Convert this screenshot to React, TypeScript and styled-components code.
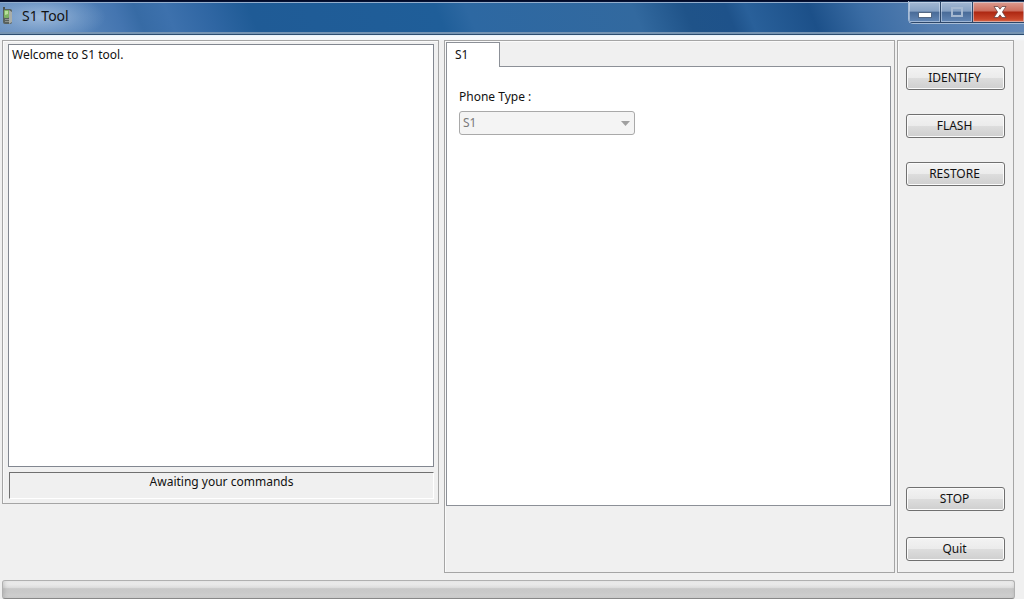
import React from "react";
import styled, { createGlobalStyle, css } from "styled-components";

const GlobalStyle = createGlobalStyle`
  *, *::before, *::after { box-sizing: border-box; }
  body {
    margin: 0;
    background: #f0f0f0;
    color: #111;
    font: 12px/16px "Noto Sans", "Open Sans", sans-serif;
  }
  button, select, textarea { font: inherit; color: inherit; margin: 0; }
`;

const Window = styled.div`
  display: flex;
  flex-direction: column;
  min-height: 100vh;
  background: #f0f0f0;
`;

const TitleBar = styled.header`
  display: flex;
  align-items: flex-start;
  justify-content: space-between;
  height: 35px;
  border-top: 1px solid #020a26;
  border-bottom: 1px solid #2c4d70;
  background:
    linear-gradient(#061336 0 1px, #94aecd 1px 2px, transparent 2px 31px, #7594b3 31px 33px),
    radial-gradient(ellipse 64px 24px at 42px 16px, rgba(176, 200, 228, 0.75), rgba(150, 182, 218, 0.35) 60%, transparent),
    linear-gradient(
      68deg,
      #6a90bf 0,
      #5583b9 8%,
      #4475b0 12%,
      #376ba5 14%,
      #3d71ad 17%,
      #2f66a3 21%,
      #1f5b96 25%,
      #1f5e99 43%,
      #2d68a2 46%,
      #32699f 62%,
      #1f5389 67%,
      #1e528a 71%,
      #29609a 73%,
      #1c5089 79%,
      #3a6ca4 84%,
      #537db0 90%,
      #668bb9 100%
    );
`;

const Caption = styled.h1`
  display: flex;
  align-items: center;
  gap: 8px;
  margin: 0;
  padding: 5px 0 0 2px;
  font-size: 14px;
  line-height: 20px;
  font-weight: 400;
`;

const CaptionButtons = styled.div`
  display: flex;
  height: 23px;
  border: solid #a9bdd6;
  border-width: 0 0 1px 1px;
  border-radius: 0 0 0 5px;
  overflow: hidden;
`;

const CaptionButton = styled.button<{ $close?: boolean }>`
  display: flex;
  align-items: center;
  justify-content: center;
  width: 32px;
  height: 22px;
  padding: 0;
  border: solid #2c4668;
  border-width: 1px 1px 1px 0;
  box-shadow: inset 0 0 0 1px rgba(220, 232, 247, 0.5);
  background: linear-gradient(#a3b8d3, #86a1c3 45%, #4a6c99 52%, #6488b6);
  ${(p) =>
    p.$close &&
    css`
      width: 51px;
      padding-left: 3px;
      border-right-width: 0;
      background: linear-gradient(#dd9c90, #cc6d5c 45%, #ad2712 50%, #c8462a 85%, #d96c4d);
    `}
`;

const Workspace = styled.main`
  display: grid;
  grid-template-columns: minmax(0, 437fr) minmax(0, 570fr);
  flex: 1;
  align-items: start;
  gap: 5px;
  padding: 4px 10px 7px 2px;
  border-top: 1px solid #e8f3fc;
  background: linear-gradient(#f4f8fc 0 3px, #f0f0f0 5px);
`;

const groupFrame = css`
  border: 1px solid #a5a5a5;
  box-shadow: inset 1px 1px #fafafa;
`;

const LogPanel = styled.section`
  ${groupFrame}
  padding: 3px 4px 4px 5px;
`;

const Log = styled.textarea`
  display: block;
  width: 100%;
  height: 423px;
  padding: 2px 3px;
  border: 1px solid #828790;
  border-radius: 0;
  background: #fff;
  outline: 0;
  resize: none;
`;

const Status = styled.output`
  display: block;
  height: 27px;
  margin: 5px 0 0 1px;
  padding-top: 1px;
  border: solid;
  border-width: 1px;
  border-color: #707070 #fff #fff #707070;
  text-align: center;
`;

const RightSide = styled.div`
  display: flex;
  align-self: stretch;
  gap: 2px;
  min-width: 0;
`;

const TabPanel = styled.section`
  ${groupFrame}
  flex: 1;
  min-width: 0;
  padding: 1px 3px 0 1px;
`;

const Tab = styled.button`
  display: block;
  position: relative;
  width: 54px;
  height: 25px;
  margin-bottom: -1px;
  padding: 0 8px;
  border: 1px solid #8c9097;
  border-bottom: 0;
  background: #fff;
  text-align: left;
`;

const TabPage = styled.div`
  height: 440px;
  padding: 22px 12px;
  border: 1px solid #8c9097;
  background: #fff;
`;

const Field = styled.label`
  display: grid;
  gap: 6px;
  width: 176px;
`;

const SelectBox = styled.span`
  display: grid;
  align-items: center;
  color: #7a7a7a;

  > * { grid-area: 1 / 1; }
  > svg { justify-self: end; margin-right: 5px; pointer-events: none; }
`;

const Select = styled.select`
  appearance: none;
  width: 100%;
  height: 24px;
  padding: 0 3px;
  border: 1px solid #a9a9a9;
  border-radius: 3px;
  background: #f4f4f4;
  opacity: 1;
`;

const Actions = styled.nav`
  ${groupFrame}
  display: flex;
  flex: none;
  flex-direction: column;
  justify-content: space-between;
  width: 117px;
  padding: 25px 8px 11px;
`;

const ActionGroup = styled.div<{ $gap: number }>`
  display: grid;
  gap: ${(p) => p.$gap}px;
`;

const ActionButton = styled.button`
  height: 24px;
  padding: 0 2px 1px 0;
  border: 1px solid #707070;
  border-radius: 3px;
  box-shadow: inset 0 0 0 1px #fbfbfb;
  background: linear-gradient(#f3f3f3, #ebebeb 50%, #dddddd 50%, #cfcfcf);
`;

const Progress = styled.div`
  height: 19px;
  margin: 0 9px 0 2px;
  border: 1px solid #b0b0b0;
  border-bottom-color: #888;
  border-radius: 3px;
  background: linear-gradient(#fafafa, #dcdcdc 40%, #c8c8c8 45%, #cacaca 70%, #d9d9d9);
  box-shadow: inset 1px 0 4px rgba(120, 120, 120, 0.35);
`;

const PhoneIcon = () => (
  <svg width="12" height="20" viewBox="0 0 12 20" aria-hidden="true">
    <rect x="1" y="1" width="2" height="5" fill="#4a524f" />
    <rect x="1" y="3" width="9" height="15" rx="2" fill="#59615d" />
    <path d="M7 4 L10 6 V16 L7 18 Z" fill="#a9ada8" />
    <rect x="2" y="4" width="5" height="8" rx="1" fill="#7db463" />
    <path d="M3 5 H6 V8 L3 9 Z" fill="#b9df9b" />
    <path d="M3 13.5 H7 M3 15.5 H7" stroke="#8c9490" />
  </svg>
);

const MinimizeIcon = () => (
  <svg width="14" height="14" viewBox="0 0 14 14" aria-hidden="true">
    <rect x="0.5" y="7.5" width="13" height="5" fill="#fff" stroke="#536884" />
  </svg>
);

const MaximizeIcon = () => (
  <svg width="14" height="14" viewBox="0 0 14 14" aria-hidden="true">
    <rect x="2" y="3" width="10" height="8" fill="none" stroke="#a6b9d1" strokeWidth="2" />
  </svg>
);

const CloseIcon = () => (
  <svg width="14" height="14" viewBox="0 0 14 14" aria-hidden="true">
    <path
      d="M1 1.5 H5 L7 4.2 L9 1.5 H13 L9.4 7 L13 12.5 H9 L7 9.8 L5 12.5 H1 L4.6 7 Z"
      fill="#fff"
      stroke="#6b4545"
      strokeWidth="0.8"
    />
  </svg>
);

export default function App() {
  return (
    <>
      <GlobalStyle />
      <Window>
        <TitleBar>
          <Caption>
            <PhoneIcon />
            S1 Tool
          </Caption>
          <CaptionButtons>
            <CaptionButton aria-label="Minimize"><MinimizeIcon /></CaptionButton>
            <CaptionButton aria-label="Maximize" disabled><MaximizeIcon /></CaptionButton>
            <CaptionButton aria-label="Close" $close><CloseIcon /></CaptionButton>
          </CaptionButtons>
        </TitleBar>

        <Workspace>
          <LogPanel>
            <Log aria-label="Log" readOnly defaultValue="Welcome to S1 tool." />
            <Status>Awaiting your commands</Status>
          </LogPanel>

          <RightSide>
            <TabPanel>
              <Tab role="tab" aria-selected="true">S1</Tab>
              <TabPage role="tabpanel">
                <Field>
                  Phone Type :
                  <SelectBox>
                    <Select disabled defaultValue="S1">
                      <option>S1</option>
                    </Select>
                    <svg width="9" height="5" viewBox="0 0 9 5" aria-hidden="true">
                      <path d="M0 0 H9 L4.5 5 Z" fill="#a0a0a0" />
                    </svg>
                  </SelectBox>
                </Field>
              </TabPage>
            </TabPanel>

            <Actions aria-label="Actions">
              <ActionGroup $gap={24}>
                <ActionButton>IDENTIFY</ActionButton>
                <ActionButton>FLASH</ActionButton>
                <ActionButton>RESTORE</ActionButton>
              </ActionGroup>
              <ActionGroup $gap={26}>
                <ActionButton>STOP</ActionButton>
                <ActionButton>Quit</ActionButton>
              </ActionGroup>
            </Actions>
          </RightSide>
        </Workspace>

        <Progress role="progressbar" aria-label="Progress" aria-valuenow={0} />
      </Window>
    </>
  );
}
